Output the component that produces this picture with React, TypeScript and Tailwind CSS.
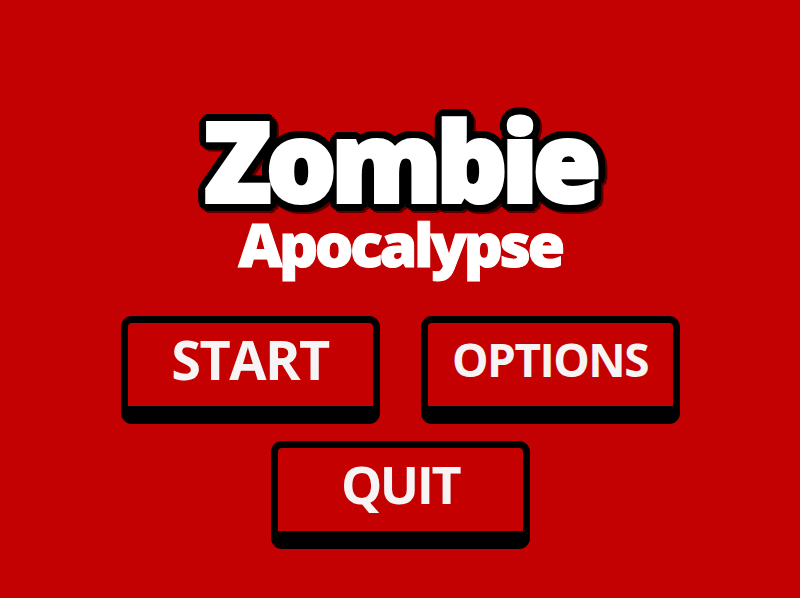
import React from "react";

type MenuButtonProps = {
  label: string;
  textClass: string;
};

// Chunky arcade-style key: black rim, thick black base, red face
function MenuButton({ label, textClass }: MenuButtonProps) {
  return (
    <button
      type="button"
      className="flex h-[108px] w-[259px] items-center justify-center rounded-[11px] border-[7px] border-b-[18px] border-black bg-[#c40000] pb-[12px]"
    >
      <span
        className={`text-[#f6f4f4] font-bold leading-none ${textClass}`}
        style={{ fontFamily: '"Open Sans", "Noto Sans", sans-serif' }}
      >
        {label}
      </span>
    </button>
  );
}

export default function App() {
  return (
    <div
      className="flex h-[598px] w-full flex-col items-center overflow-hidden bg-[#c30002] pt-[104px]"
      style={{ fontFamily: '"Open Sans", "Noto Sans", sans-serif' }}
    >
      <h1 className="flex flex-col items-center">
        {/* heavy logo word: white stroke thickens the face, a ring of black shadows draws the outline */}
        <span className="block text-[110px] leading-[110px] font-extrabold tracking-[-5px] text-white [-webkit-text-stroke:4px_#fff] [text-shadow:9px_0_0_#000,8.7px_2.3px_0_#000,7.8px_4.5px_0_#000,6.4px_6.4px_0_#000,4.5px_7.8px_0_#000,2.3px_8.7px_0_#000,0_9px_0_#000,-2.3px_8.7px_0_#000,-4.5px_7.8px_0_#000,-6.4px_6.4px_0_#000,-7.8px_4.5px_0_#000,-8.7px_2.3px_0_#000,-9px_0_0_#000,-8.7px_-2.3px_0_#000,-7.8px_-4.5px_0_#000,-6.4px_-6.4px_0_#000,-4.5px_-7.8px_0_#000,-2.3px_-8.7px_0_#000,0_-9px_0_#000,2.3px_-8.7px_0_#000,4.5px_-7.8px_0_#000,6.4px_-6.4px_0_#000,7.8px_-4.5px_0_#000,8.7px_-2.3px_0_#000,4px_0_0_#000,0_4px_0_#000,-4px_0_0_#000,0_-4px_0_#000] [filter:drop-shadow(2px_2px_0_rgba(0,0,0,0.55))]">
          Zombie
        </span>
        <span className="mt-[0px] block text-[61px] leading-[60px] font-extrabold tracking-[-3.5px] text-white [-webkit-text-stroke:1px_#fff]">
          Apocalypse
        </span>
      </h1>

      <div className="mt-[42px] flex flex-col items-center gap-[17px]">
        <div className="flex gap-[41px]">
          <MenuButton label="START" textClass="text-[54px] tracking-[-1.5px]" />
          <MenuButton label="OPTIONS" textClass="text-[46px] tracking-[-1.5px]" />
        </div>
        <MenuButton label="QUIT" textClass="text-[52px] tracking-[-2.5px]" />
      </div>
    </div>
  );
}
